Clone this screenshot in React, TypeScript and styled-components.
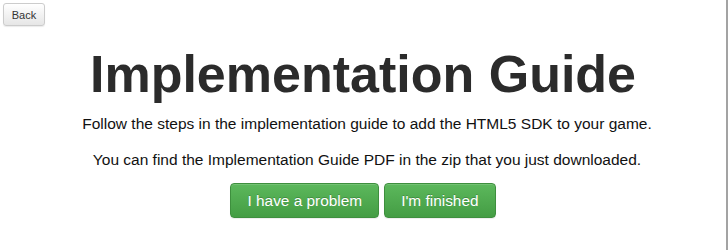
import React from 'react';
import styled, { createGlobalStyle } from 'styled-components';

const GlobalStyle = createGlobalStyle`
  html, body {
    margin: 0;
    padding: 0;
    background: #fff;
    font-family: "Liberation Sans", Arial, sans-serif;
    color: #333;
  }
`;

const Page = styled.div`
  width: 726px;
  height: 250px;
  border-right: 2px solid #a3a3a3;
  overflow: hidden;
`;

const BackButton = styled.button`
  margin: 3px 0 0 3px;
  width: 42px;
  height: 23px;
  padding: 0;
  font-family: "Liberation Sans", Arial, sans-serif;
  font-size: 11px;
  color: #333;
  background: linear-gradient(to bottom, #fff 0%, #e6e6e6 100%);
  border: 1px solid #ccc;
  border-radius: 3px;
  box-shadow: 0 1px 1px rgba(0, 0, 0, 0.08);
  cursor: pointer;
`;

const Content = styled.div`
  display: flex;
  flex-direction: column;
  align-items: center;
  text-align: center;
`;

const Title = styled.h1`
  margin: 18px 0 9px;
  font-size: 52px;
  line-height: 60px;
  font-weight: bold;
  color: #2b2b2b;
`;

const Text = styled.p<{ $gap?: number }>`
  margin: ${(p) => p.$gap ?? 0}px 0 0 8px;
  font-size: 15.5px;
  line-height: 22px;
  color: #111;
`;

const Actions = styled.div`
  display: flex;
  gap: 5px;
  margin-top: 12px;
`;

const GreenButton = styled.button`
  height: 35px;
  padding: 0 16px;
  font-family: "Liberation Sans", Arial, sans-serif;
  font-size: 15.4px;
  color: #fff;
  background: linear-gradient(to bottom, #5cb85c 0%, #449d44 100%);
  border: 1px solid #3e8f3e;
  border-radius: 4px;
  text-shadow: 0 -1px 0 rgba(0, 0, 0, 0.2);
  box-shadow: inset 0 1px 0 rgba(255, 255, 255, 0.15), 0 1px 1px rgba(0, 0, 0, 0.075);
  cursor: pointer;
`;

export default function App() {
  return (
    <Page>
      <GlobalStyle />
      <BackButton>Back</BackButton>
      <Content>
        <Title>Implementation Guide</Title>
        <Text>Follow the steps in the implementation guide to add the HTML5 SDK to your game.</Text>
        <Text $gap={14}>You can find the Implementation Guide PDF in the zip that you just downloaded.</Text>
        <Actions>
          <GreenButton>I have a problem</GreenButton>
          <GreenButton>I'm finished</GreenButton>
        </Actions>
      </Content>
    </Page>
  );
}
